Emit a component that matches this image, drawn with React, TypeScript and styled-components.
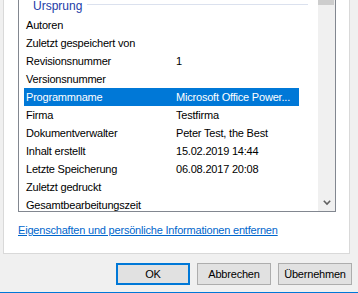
import React from "react";
import styled, { createGlobalStyle } from "styled-components";

const rows = [
  { label: "Autoren", value: "" },
  { label: "Zuletzt gespeichert von", value: "" },
  { label: "Revisionsnummer", value: "1" },
  { label: "Versionsnummer", value: "" },
  { label: "Programmname", value: "Microsoft Office Power...", selected: true },
  { label: "Firma", value: "Testfirma" },
  { label: "Dokumentverwalter", value: "Peter Test, the Best" },
  { label: "Inhalt erstellt", value: "15.02.2019 14:44" },
  { label: "Letzte Speicherung", value: "06.08.2017 20:08" },
  { label: "Zuletzt gedruckt", value: "" },
  { label: "Gesamtbearbeitungszeit", value: "" },
];

const GlobalStyle = createGlobalStyle`
  body {
    margin: 0;
    background: #f0f0f0;
    font-family: "Liberation Sans", Arial, sans-serif;
    font-size: 11px;
    letter-spacing: -0.2px;
    color: #000;
  }
`;

const App = () => {
  return (
    <>
      <GlobalStyle />
      <Dialog>
        <TabPage>
          <ListBox>
            <ListContent>
              <Scrolled>
                <GroupHeader>
                  <span>Ursprung</span>
                  <GroupLine />
                </GroupHeader>
                {rows.map((row) => (
                  <Row key={row.label} $selected={!!row.selected}>
                    <Cell>{row.label}</Cell>
                    <Cell>{row.value}</Cell>
                  </Row>
                ))}
              </Scrolled>
            </ListContent>
            <ScrollBar>
              <Thumb />
              <ArrowButton>
                <svg width="8" height="6" viewBox="0 0 8 6">
                  <path d="M0.8 0.8 L4 4 L7.2 0.8" fill="none" stroke="#606060" strokeWidth="1.6" />
                </svg>
              </ArrowButton>
            </ScrollBar>
          </ListBox>
          <Link href="#">Eigenschaften und persönliche Informationen entfernen</Link>
        </TabPage>
        <ButtonRow>
          <Button $primary>OK</Button>
          <Button>Abbrechen</Button>
          <Button>Übernehmen</Button>
        </ButtonRow>
      </Dialog>
    </>
  );
};

export default App;

const Dialog = styled.div`
  width: 358px;
  height: 293px;
  box-sizing: border-box;
  display: flex;
  flex-direction: column;
  overflow: hidden;
  border-bottom: 1px solid #0078d7;
`;

const TabPage = styled.div`
  width: 347px;
  height: 254px;
  box-sizing: border-box;
  margin-left: 3px;
  padding-left: 14px;
  background: #fff;
  border: 1px solid #d9d9d9;
  border-top: none;
  display: flex;
  flex-direction: column;
`;

const ListBox = styled.div`
  width: 318px;
  height: 212px;
  box-sizing: border-box;
  border: 1px solid #828790;
  border-top: none;
  display: flex;
  overflow: hidden;
`;

const ListContent = styled.div`
  flex: 1;
  overflow: hidden;
`;

/* list is scrolled a few pixels down */
const Scrolled = styled.div`
  margin-top: -4px;
`;

const GroupHeader = styled.div`
  height: 20px;
  display: flex;
  align-items: center;
  padding-left: 14px;
  color: #1d3ca8;
  font-size: 12px;
  letter-spacing: 0;
`;

const GroupLine = styled.div`
  flex: 1;
  height: 1px;
  margin: 0 10px 4px 5px;
  background: #dbe1ee;
`;

const Row = styled.div<{ $selected: boolean }>`
  display: grid;
  grid-template-columns: 150px 1fr;
  width: 275px;
  height: 18px;
  line-height: 18px;
  margin-left: 5px;
  white-space: nowrap;
  background: ${(p) => (p.$selected ? "#0078d7" : "transparent")};
  color: ${(p) => (p.$selected ? "#fff" : "#000")};
`;

const Cell = styled.div`
  padding-left: 2px;
  overflow: hidden;
`;

const ScrollBar = styled.div`
  width: 17px;
  background: #f0f0f0;
  display: flex;
  flex-direction: column;
  justify-content: space-between;
`;

const Thumb = styled.div`
  height: 5px;
  margin-right: 1px;
  background: #cdcdcd;
`;

const ArrowButton = styled.div`
  height: 17px;
  display: flex;
  align-items: center;
  justify-content: center;
`;

const Link = styled.a`
  margin-top: 9px;
  line-height: 18px;
  color: #0066cc;
  text-decoration: underline;
  align-self: flex-start;
`;

const ButtonRow = styled.div`
  display: flex;
  justify-content: flex-end;
  gap: 7px;
  padding: 9px 6px 0 0;
`;

const Button = styled.button<{ $primary?: boolean }>`
  width: 74px;
  height: 22px;
  box-sizing: border-box;
  padding: 0;
  font-family: inherit;
  font-size: 11px;
  letter-spacing: -0.2px;
  color: #000;
  background: #e1e1e1;
  border: ${(p) => (p.$primary ? "2px solid #0078d7" : "1px solid #adadad")};
  border-radius: 0;
`;
